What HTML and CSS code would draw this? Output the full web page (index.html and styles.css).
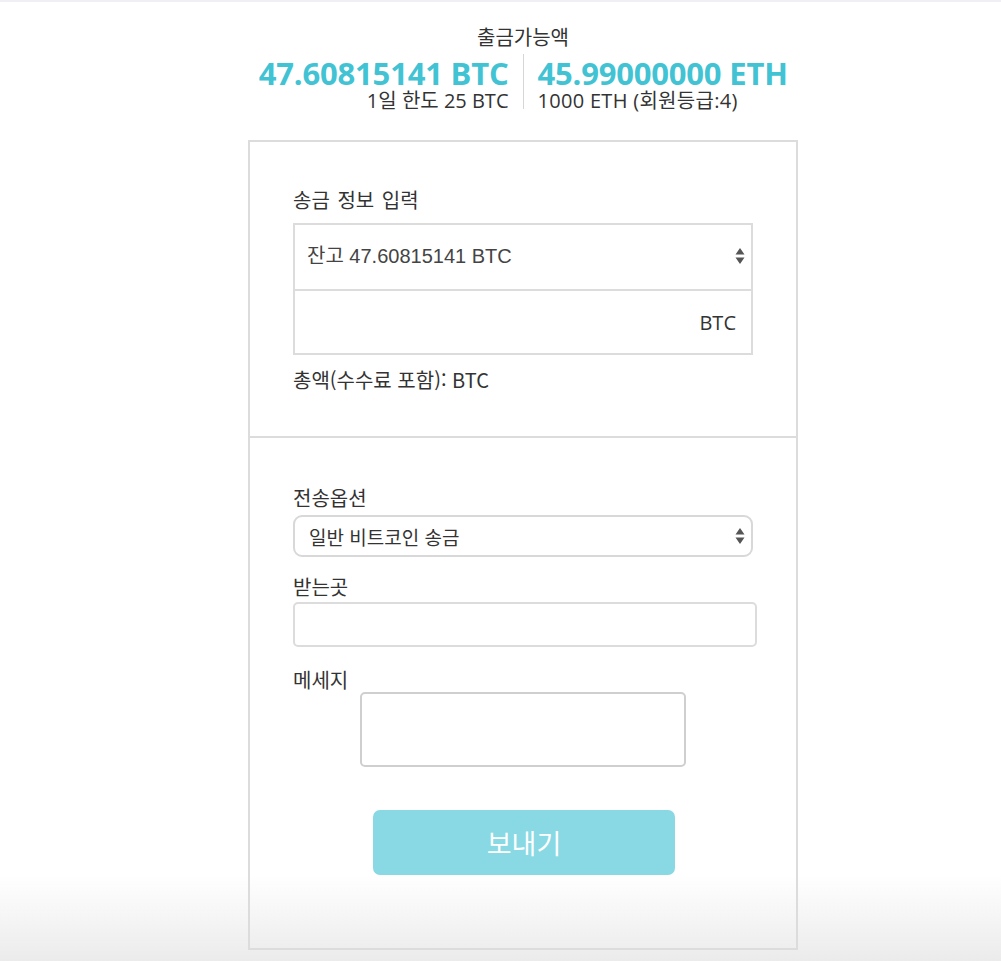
FILE: index.html
```html
<!DOCTYPE html>
<html lang="ko">
<head>
<meta charset="utf-8">
<title>출금</title>
<link rel="stylesheet" href="styles.css">
</head>
<body>
<div class="topline"></div>
<div class="page">
  <header class="summary">
    <div class="summary-title">출금가능액</div>
    <div class="summary-grid">
      <div class="col col-left">
        <div class="amount">47.60815141 BTC</div>
        <div class="limit">1일 한도 25 BTC</div>
      </div>
      <div class="vdivider"></div>
      <div class="col col-right">
        <div class="amount">45.99000000 ETH</div>
        <div class="limit">1000 ETH (회원등급:4)</div>
      </div>
    </div>
  </header>

  <div class="card">
    <section class="section section-info">
      <div class="label label-info">송금 정보 입력</div>
      <div class="group">
        <div class="fake-select square">
          <span class="select-text">잔고 47.60815141 BTC</span>
          <svg class="arrows" width="10" height="18" viewBox="0 0 10 18"><path d="M5 1 L9.5 7.5 L0.5 7.5 Z M0.5 10.5 L9.5 10.5 L5 17 Z" fill="#555"/></svg>
        </div>
        <div class="amount-input"><span class="unit">BTC</span></div>
      </div>
      <div class="total">총액(수수료 포함): BTC</div>
    </section>

    <section class="section section-send">
      <div class="label">전송옵션</div>
      <div class="fake-select rounded">
        <span class="select-text ko">일반 비트코인 송금</span>
        <svg class="arrows" width="10" height="18" viewBox="0 0 10 18"><path d="M5 1 L9.5 7.5 L0.5 7.5 Z M0.5 10.5 L9.5 10.5 L5 17 Z" fill="#555"/></svg>
      </div>
      <div class="label label-to">받는곳</div>
      <div class="text-input"></div>
      <div class="label label-msg">메세지</div>
      <div class="textarea-wrap"><div class="textarea"></div></div>
      <div class="btn-wrap"><button class="send-btn" type="button">보내기</button></div>
    </section>
  </div>
</div>
</body>
</html>
```

FILE: styles.css
```css
html, body {
  margin: 0;
  padding: 0;
}
body {
  min-height: 961px;
  background: linear-gradient(to bottom, #ffffff 0px, #ffffff 875px, #ebebeb 961px);
  font-family: "Open Sans", "Noto Sans CJK KR", sans-serif;
  color: #333;
}
.topline {
  height: 2px;
  background: #eef0f3;
}
.page {
  width: 550px;
  margin-left: 248px;
}
.summary {
  padding-top: 22px;
  height: 116px;
  box-sizing: border-box;
}
.summary-title {
  text-align: center;
  font-family: "Noto Sans CJK KR", sans-serif;
  font-size: 20px;
  line-height: 26px;
  color: #333;
}
.summary-grid {
  display: grid;
  grid-template-columns: 1fr 1px 1fr;
  column-gap: 14px;
  margin-top: 6px;
}
.col-left { text-align: right; }
.col-right { text-align: left; }
.amount {
  font-family: "Open Sans", sans-serif;
  font-weight: 700;
  font-size: 31px;
  line-height: 34px;
  color: #41c3d4;
  white-space: nowrap;
  letter-spacing: -0.2px;
}
.limit {
  font-family: "Open Sans", "Noto Sans CJK KR", sans-serif;
  font-size: 20px;
  line-height: 22px;
  color: #333;
  white-space: nowrap;
}
.col-right .limit {
  letter-spacing: 0.3px;
}
.vdivider {
  background: #d6d6d6;
  height: 55px;
  margin-top: -2px;
}
.card {
  margin-top: 22px;
  border: 2px solid #dcdcdc;
  width: 550px;
  box-sizing: border-box;
}
.section {
  padding: 0 43px;
}
.section-info {
  padding-top: 46px;
  padding-bottom: 44px;
  border-bottom: 2px solid #dcdcdc;
}
.label {
  font-family: "Noto Sans CJK KR", sans-serif;
  font-size: 20px;
  line-height: 24px;
  color: #333;
  white-space: nowrap;
}
.label-info {
  margin-bottom: 11px;
  word-spacing: 2px;
}
.group {
  width: 460px;
}
.fake-select {
  display: flex;
  align-items: center;
  justify-content: space-between;
  box-sizing: border-box;
  border: 2px solid #dcdcdc;
  background: #fff;
}
.fake-select.square {
  height: 68px;
  padding: 0 6px 0 12px;
}
.square .select-text {
  margin-bottom: 6px;
}
.square .arrows {
  margin-bottom: 2px;
}
.select-text {
  font-family: "Liberation Sans", "Noto Sans CJK KR", sans-serif;
  font-size: 20px;
  color: #444;
  white-space: nowrap;
}
.select-text.ko {
  font-family: "Noto Sans CJK KR", sans-serif;
  font-size: 19px;
  color: #333;
}
.arrows {
  display: block;
}
.amount-input {
  height: 64px;
  box-sizing: border-box;
  border: 2px solid #dcdcdc;
  border-top: none;
  display: flex;
  align-items: center;
  justify-content: flex-end;
  padding-right: 15px;
}
.unit {
  font-family: "Open Sans", sans-serif;
  font-size: 20px;
  color: #333;
}
.total {
  margin-top: 13px;
  font-family: "Noto Sans CJK KR", "Open Sans", sans-serif;
  font-size: 20px;
  line-height: 24px;
  color: #333;
  white-space: nowrap;
}
.section-send {
  padding-top: 48px;
  padding-bottom: 73px;
}
.fake-select.rounded {
  margin-top: 5px;
  width: 460px;
  height: 42px;
  border-radius: 9px;
  border-color: #d8d8d8;
  padding: 0 6px 0 14px;
}
.label-to {
  margin-top: 18px;
}
.text-input {
  margin-top: 3px;
  width: 464px;
  height: 45px;
  box-sizing: border-box;
  border: 2px solid #dcdcdc;
  border-radius: 5px;
  background: #fff;
}
.label-msg {
  margin-top: 21px;
}
.textarea-wrap {
  display: flex;
  justify-content: center;
}
.textarea {
  width: 326px;
  height: 75px;
  box-sizing: border-box;
  border: 2px solid #cfcfcf;
  border-radius: 5px;
  background: #fff;
}
.btn-wrap {
  display: flex;
  justify-content: center;
  margin-top: 43px;
}
.send-btn {
  width: 302px;
  height: 65px;
  border: none;
  border-radius: 7px;
  background: #88d9e3;
  color: #fff;
  font-family: "Noto Sans CJK KR", sans-serif;
  font-size: 27px;
  padding: 0;
  margin-left: 2px;
}
```
